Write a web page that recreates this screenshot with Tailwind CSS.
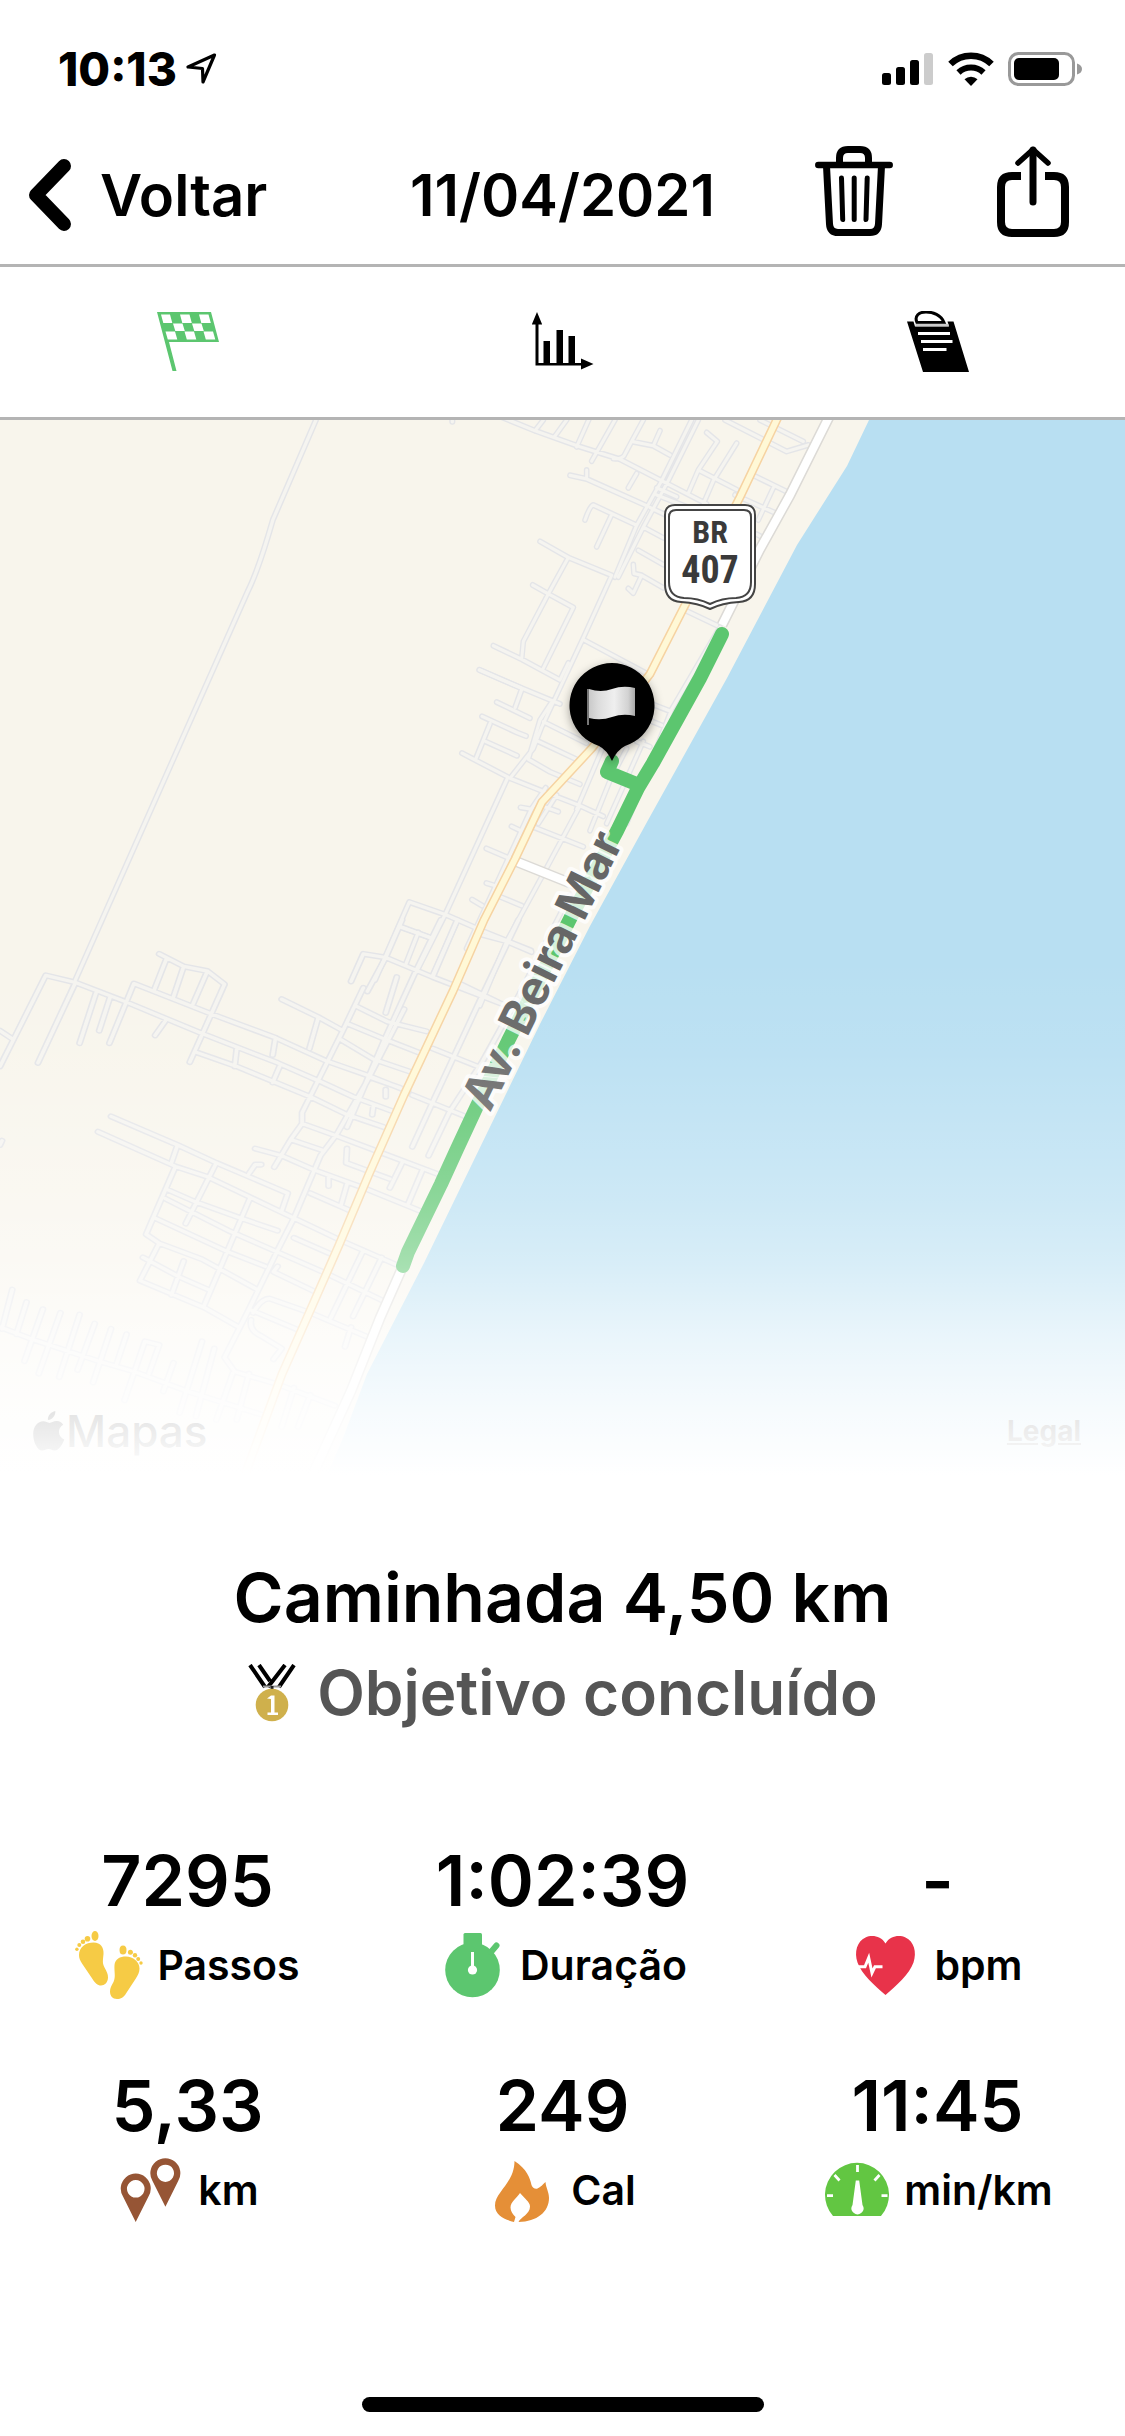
<!DOCTYPE html>
<html lang="pt-BR">
<head>
<meta charset="utf-8">
<meta name="viewport" content="width=device-width, initial-scale=1">
<title>Caminhada 11/04/2021</title>
<script src="https://cdn.jsdelivr.net/npm/@tailwindcss/browser@4"></script>
</head>
<body class="flex min-h-screen flex-col bg-white font-['Inter',sans-serif] font-semibold text-black">

<!-- Status bar -->
<div class="flex h-[126px] items-center justify-between pt-3 pr-[43px] pl-[58px]">
  <div class="flex items-center gap-2">
    <span class="text-[46px] leading-none font-extrabold">10:13</span>
    <svg class="h-8 w-8" viewBox="0 0 32 32" fill="none" stroke="#000" stroke-width="3.200" stroke-linejoin="round"><path d="M29.500 2 3 14 17.500 15.500 18 29Z"/></svg>
  </div>
  <div class="flex items-center gap-[14px]">
    <svg class="h-8 w-[52px]" viewBox="0 0 52 32"><rect x="0" y="20" width="9" height="12" rx="2.500"/><rect x="14" y="14" width="9" height="18" rx="2.500"/><rect x="28" y="7" width="9" height="25" rx="2.500"/><rect x="42" y="0" width="9" height="32" rx="2.500" fill="#ccc"/></svg>
    <svg class="h-[34px] w-[46px]" viewBox="0 0 46 34"><path d="M23 34l-6.500-6.800a9.500 9.500 0 0 1 13 0z"/><path d="M10.500 20.500a18 18 0 0 1 25 0" fill="none" stroke="#000" stroke-width="6"/><path d="M2.500 12a29.500 29.500 0 0 1 41 0" fill="none" stroke="#000" stroke-width="6.500"/></svg>
    <svg class="h-[34px] w-[74px]" viewBox="0 0 74 34"><rect x="1.500" y="1.500" width="64" height="31" rx="9" fill="none" stroke="#999" stroke-width="3"/><rect x="6" y="6" width="45" height="22" rx="5"/><path d="M69 11.500q5 1.500 5 5.500t-5 5.500z" fill="#999"/></svg>
  </div>
</div>

<!-- Navigation -->
<header class="grid h-[141px] grid-cols-[1fr_auto_1fr] items-center border-b-[3px] border-[#b4b4b4] text-[58px] leading-none">
  <button type="button" class="ml-7 flex items-center gap-7 justify-self-start">
    <svg class="h-[74px] w-11" viewBox="0 0 44 74" fill="none" stroke="#000" stroke-width="14" stroke-linecap="round" stroke-linejoin="round"><path d="M36 8 8 37 36 66"/></svg>
    <span>Voltar</span>
  </button>
  <h1>11/04/2021</h1>
  <div class="mr-14 flex items-center gap-[104px] justify-self-end pb-2">
    <button type="button" aria-label="Excluir">
      <svg class="block h-[90px] w-[78px]" viewBox="0 0 78 90" fill="none" stroke="#000" stroke-width="7"><path d="M24.500 18v-6q0-8.500 8.500-8.500h12q8.500 0 8.500 8.500v6M11.500 20l3 58q.5 8.500 8.500 8.500h32q8 0 8.500-8.500l3-58"/><path d="M3.300 19h71.400" stroke-width="6.500" stroke-linecap="round"/><path d="M26.500 32l1.200 41.500M39.200 32v41.500M52.200 32l-1.200 41.500" stroke-width="5" stroke-linecap="round"/></svg>
    </button>
    <button type="button" aria-label="Compartilhar">
      <svg class="block h-[91px] w-[72px]" viewBox="0 0 72 91" fill="none" stroke="#000" stroke-width="8"><path d="M24 30h-9Q4 30 4 41v35q0 11 11 11h42q11 0 11-11V41q0-11-11-11h-9"/><path d="M36 4v52" stroke-width="7" stroke-linecap="round"/><path d="M21 17 36 3.500 51 17" stroke-width="5.500" stroke-linecap="round" stroke-linejoin="round"/></svg>
    </button>
  </div>
</header>

<nav class="grid h-[153px] grid-cols-3 items-center justify-items-center border-b-[3px] border-[#b4b4b4]">
  <button type="button" aria-label="Resumo">
    <svg class="block h-[62px] w-[62px]" viewBox="0 0 62 62"><path d="M0 1h54l8 30H12l7.500 29H15.500z" fill="#5cc66f"/><path d="M4 3.500h9l2.300 8.500H6.300zM23 3.500h9.500l2.300 8.500h-9.500zM42 3.500h9.500l2.300 8.500h-9.500zM16 12.500h9.500l2.300 7.500h-9.500zM35 12.500h9.500l2.300 7.500h-9.500zM8.500 20.500H18l2.300 8h-9.500zM27.500 20.500H37l2.300 8h-9.500zM46.500 20.500H56l2.300 8h-9.500z" fill="#fff"/></svg>
  </button>
  <button type="button" aria-label="Gráficos">
    <svg class="block h-[62px] w-[62px]" viewBox="0 1 62 62"><path d="M5 2l5.200 12.500H6.500V53H49v-4.500L61.500 54 49 59.500V55.500H3.500V14.500H-.2zM11.500 31h6.500v23h-6.500zM24.500 20H31v34h-6.500zM36.500 26H43v28h-6.500z"/></svg>
  </button>
  <button type="button" aria-label="Notas">
    <svg class="block h-[62px] w-[62px]" viewBox="0 1 62 62"><path d="M0 11.500h6.500L8 16.500h34L40.500 11.500h6L62 62H16z"/><path d="M10 12.500C7 6 12 2 19 2S34 5 37 12.500z" fill="#fff" stroke="#000" stroke-width="3"/><path d="M8.500 15h33" stroke="#ccc" stroke-width="2.500"/><path d="M11 23.500h32M14 31.500h31.500M16 39.500h23.500" stroke="#fff" stroke-width="3"/></svg>
  </button>
</nav>

<!-- Route map -->
<section class="relative overflow-hidden">
  <svg class="block h-auto w-full" viewBox="0 420 1125 1055" role="img" aria-label="Mapa do percurso">
    <defs>
      <linearGradient id="cloth" x1="0" x2="1" y1="0" y2="0"><stop offset="0" stop-color="#c9c9c9"/><stop offset=".2" stop-color="#dcdcdc"/><stop offset=".55" stop-color="#efefef"/><stop offset=".85" stop-color="#d2d2d2"/><stop offset="1" stop-color="#a8a8a8"/></linearGradient>
      <filter id="shade" x="-30%" y="-30%" width="160%" height="160%"><feDropShadow dx="0" dy="3" stdDeviation="5" flood-opacity=".35"/></filter>
      <g id="streets">
        <path transform="translate(480 420) scale(.3333 .3571)" d="M60-10 165 30 300 75 420 110 545 170 680 235M190 0 165 30M260 0 225 45M345-40 290 75M405 0 335 115M490 0 455 60 435 95Q430 110 400 108M455 60 520 72 570 98M540 30 520 72M635 0 545 170 470 295 405 440M655 0 562 175 490 300 415 440M470 150 445 190M680 35 712 60 655 140 770 195M655 140 625 205M770 65 700 170 670 235M735 0 920 88 985 70M840 0 970 60M820 155 930 205M765 210 890 262M880 190 835 280M830 320 850 330M270 155 320 165 500 240M320 140V165M315 280Q330 240 340 238L470 295M395 265 350 355M180 340 265 385 395 435M265 385 205 487 130 620 125 670M158 462 205 487 280 525 190 695M40 632 125 670 240 728 265 680M395 435 310 610 185 860 160 920 90 1003M530 190 590 215M530 210 640 250M510 245 555 265M490 300 550 330M475 365 550 405M460 405 462 430 485 435 550 470M485 435 460 485 445 472M310 615 500 710M0 700 110 745 240 795M620 535 710 575M720 580 575 810 440 1130M50 790 150 835M215 790 180 840 145 950 210 985 300 1020M190 845 320 905M175 900 300 955M90 1003 190 1040 300 1080 370 1110M185 1080 235 1097M500 790 570 815M505 840 545 855M470 900 510 915M440 920 390 1010 330 1150M490 900 380 1130M300 1080 185 1280 80 1460 0 1640M230 1050 175 1130M160 1140 310 1195M60 1335 125 1360M0 1440 80 1460 155 1490M270 1330 100 1640M390 870 290 1090"/>
        <path transform="translate(0 420) scale(.359 .3571)" d="M1260-5V5M880 0 760 280Q720 420 690 480L210 1568M1453 755 1435 805M1335 700 1450 750M1343 830 1440 875 1465 885M1365 850 1325 950M1352 900 1440 940M1287 933 1415 1000 1240 1385 1160 1545M1355 1200 1420 1228M1355 1297 1375 1303M1315 1343 1343 1360M1450 1085 1480 1090M1425 1138 1450 1150M1480 1090 1300 1480M1520 1030 1480 1090M1140 1350 1240 1385 1320 1420M1140 1350 1045 1568M1115 1420 1200 1450M1165 1435 1130 1525M1275 1400 1205 1555"/>
        <path transform="translate(0 920) scale(.4082 .3571)" d="M185 175 93 400M0 410 33 335 112 155 185 175 310 230 495 318 680 400 780 450 865 495 960 535M0 310 33 335M0 630 5 618M235 205 195 345M270 215 243 310M268 345 328 178 515 262 675 330 800 395 900 435 1000 480M390 95 450 130 508 143 550 180 465 398M408 108 378 195M450 130 425 215M508 143 473 235M408 278 380 323M480 370 580 410 760 495 850 545 940 580M580 360 575 410M685 410 668 455M675 330 668 378M690 222 780 272 840 310M780 272 758 360M985 0 945 105 900 200M890 190 840 310 740 540V570L712 615 672 692M860 172 890 95 945 105 1060 160 1230 235M1080 0 1020 140 940 340 850 580M1120 0 1060 160M985 20 1055 50M870 240 950 285 1045 312M972 160 945 260M990 250 900 450 825 600 785 660 720 835 680 925 610 1090M850 290 945 335 1035 375M835 335 915 390 1005 425M905 440 980 470M945 475V495M912 545 915 520M740 570 825 605 930 650 1080 715M625 640 690 660 770 700 890 750 1030 815M712 615 790 645M850 640 848 680 955 725M985 680 955 750M1035 700 1000 795M760 765 860 815M835 800 850 740M805 720V745M272 550 435 630 530 680 705 765 690 815M435 630 420 680M240 593 430 690 510 720 720 835 840 900 980 970M430 690 375 835 358 880 390 905 495 950 630 1035M530 680 455 850M612 780 500 1080M610 710 625 685 640 685M410 755 480 790 590 835 680 870M405 780 560 870 680 930 800 990 945 1070M380 835 560 930 650 970M350 945 440 1000 510 1035M450 955 420 1050M390 905 343 1010 500 1085 585 1140M720 890 820 940M890 925 810 1115M935 945 865 1110M680 970 670 985 770 1040M610 1090 550 1225 575 1265 680 1300 820 1360M610 1090 735 1150M620 1100Q640 1060 660 1060L760 1100 905 1170M860 1140 845 1195M615 1120Q610 1150 640 1165L690 1200 670 1230M0 1140 80 1175 240 1235 330 1265 460 1320 640 1385M30 1035 5 1145M65 1070 40 1160M105 1090 60 1235M148 1100 95 1270M195 1105 145 1280M232 1130 190 1260M272 1145 228 1295M310 1160 285 1245M305 1345 355 1180 390 1190 365 1270M425 1240 400 1320M495 1180 440 1380M525 1200 480 1390M570 1270 530 1400M610 1270 580 1400M720 1310 690 1420M760 1330 730 1420M1270 0 1180 215 1060 510 1010 635M1345 60 1180 400 1100 540 1050 660M1180 30 1300 85M1120 175 1220 230M1060 360 1170 410M1010 490 1140 550"/>
      </g>
    </defs>
    <rect y="420" width="1125" height="1055" fill="#f8f5ec"/>
    <use href="#streets" fill="none" stroke="#e4e5e8" stroke-width="17" stroke-linecap="round" stroke-linejoin="round"/>
    <use href="#streets" fill="none" stroke="#f5f4f0" stroke-width="9" stroke-linecap="round" stroke-linejoin="round"/>
    <path d="M869 420 847 466 797 545 727 678 647 822 590 926 540 1024 488 1131 424 1263 367 1374 343 1438 325 1480H1125V420Z" fill="#b8dff2"/>
    <g fill="none" stroke-linejoin="round">
      <path d="M830 415 790 495 760 549 722 625M403 1266 380 1318 351 1391 318 1463 310 1480M515 861 575 885" stroke="#dcdad6" stroke-width="11"/>
      <path d="M830 415 790 495 760 549 722 625M403 1266 380 1318 351 1391 318 1463 310 1480M515 861 575 885" stroke="#fff" stroke-width="8"/>
      <path d="M779 415 740 497 650 674 592 748 542 802 515 859 484 920 453 991 404 1095 369 1174 339 1245 306 1320 282 1374 243 1480" stroke="#f6d3a2" stroke-width="9"/>
      <path d="M779 415 740 497 650 674 592 748 542 802 515 859 484 920 453 991 404 1095 369 1174 339 1245 306 1320 282 1374 243 1480" stroke="#fff8d6" stroke-width="6"/>
      <path d="M722 634 700 678 653 763 638 788 617 831 572 915 508 1041 477 1106 457 1149 441 1184 408 1252 403 1266M612 761 607 772 634 783" stroke="#5cc66f" stroke-width="14" stroke-linecap="round"/>
    </g>

    <!-- Road shield -->
    <path d="M675 505h70q10 0 10 10v69q0 17-16 18-17 1-29 7-12-6-29-7-16-1-16-18v-69q0-10 10-10z" fill="#fff" stroke="#444" stroke-width="2"/>
    <path d="M676 510h68q7 0 7 7v65q0 15-15 16-14 0-26 6-12-6-26-6-15-1-15-16v-65q0-7 7-7z" fill="none" stroke="#444" stroke-width="2"/>
    <g fill="#3a3a3a" text-anchor="middle" class="font-['Liberation_Sans_Narrow','Roboto_Condensed','Roboto',sans-serif] font-bold">
      <text x="710" y="543" font-size="32">BR</text>
      <text x="710" y="583" font-size="38">407</text>
    </g>

    <text transform="translate(490 1113) rotate(-63.800)" class="font-bold" font-size="47" fill="#666" stroke="#fff" stroke-opacity=".75" stroke-width="8" stroke-linejoin="round" paint-order="stroke">Av. Beira Mar</text>

    <!-- Start pin -->
    <path d="M612 761q-5-11-13-15a42.500 42.500 0 1 1 26 0q-8 4-13 15z" filter="url(#shade)"/>
    <path d="M588 689v36" stroke="#777" stroke-width="2"/>
    <path d="M589 689q12 4 23 0t23-1v28q-12-3-23 1t-23 1z" fill="url(#cloth)"/>
  </svg>
  <div class="absolute inset-x-8 bottom-5 flex items-center justify-between">
    <div class="flex items-center text-[44px] leading-[48px] font-medium text-[#222]">
      <svg class="h-10 w-[34px]" viewBox="0 0 30 38" fill="#222"><path d="M21 0c.5 4-3 8.500-7 8.500C13.500 4.500 17 .8 21 0zM28.500 13c-6 3.500-5 11.500 1 14-2 5.500-5.500 10.500-9 10.500-2.500 0-3.500-1.500-6-1.500s-3.500 1.500-6 1.500C4 37.500 0 29.500 0 22 0 14.500 4.500 9.800 9.500 9.800c2.500 0 4 1.500 6 1.500 1.800 0 3.500-1.800 7-1.800 2.500 0 4.500 1.200 6 3.500z"/></svg>
      <span>Mapas</span>
    </div>
    <a href="#" class="mr-3 text-[28px] leading-[48px] font-bold text-[#222] underline">Legal</a>
  </div>
  <div class="pointer-events-none absolute inset-0 bg-[linear-gradient(to_bottom,rgb(255_255_255/0)_51%,rgb(255_255_255/.07)_60%,rgb(255_255_255/.2)_68%,rgb(255_255_255/.3)_74%,rgb(255_255_255/.45)_80%,rgb(255_255_255/.7)_87%,rgb(255_255_255/.86)_93%,#fff_100%)]"></div>
</section>

<!-- Workout summary -->
<section class="pt-[74px] text-center">
  <h2 class="text-[68px] leading-[96px]">Caminhada 4,50 km</h2>
  <p class="flex items-center justify-center gap-5 text-[62px] leading-[96px] text-[#555]">
    <svg class="h-[58px] w-[50px]" viewBox="0 0 50 58"><path d="M3 1 18 23M12 1 23 17M47 1 32 23M38 1 21 23" stroke="#000" stroke-width="4" fill="none"/><path d="M16 22.500h18" stroke="#999" stroke-width="2"/><path d="M25 22v4" stroke="#222" stroke-width="3"/><circle cx="25" cy="41" r="16.300" fill="#cfb04c"/><path d="M20 34.500 24 31.500h3.500V48.500H31V51H20.500V48.500H24V35z" fill="#fff"/></svg>
    <span>Objetivo concluído</span>
  </p>
</section>

<dl class="mt-[90px] grid grid-cols-3 gap-y-[57px] text-center">
  <div class="flex flex-col-reverse">
    <dt class="flex items-center justify-center gap-[14px] text-[41px] leading-[68px]">
      <svg class="h-[68px] w-[68px]" viewBox="0 0 68 68" fill="#f6cb45"><ellipse cx="20" cy="5" rx="3.500" ry="5"/><circle cx="12.500" cy="7.700" r="2.800"/><circle cx="8" cy="10.700" r="2.300"/><circle cx="4.300" cy="14" r="2"/><circle cx="1.900" cy="18.300" r="1.700"/><path d="M4 24C4 16 11 11.500 18.500 11.500S29 17 28.500 23c-.5 6-1.500 9 1 13.500S33 43 33 46.500c0 5-3.500 8-7 8s-6-2.500-8.500-6.500L7 32.500C5 29.500 4 27 4 24z"/><ellipse cx="48" cy="19" rx="3.500" ry="4.600"/><circle cx="55.400" cy="21.300" r="2.500"/><circle cx="60" cy="24.300" r="2.200"/><circle cx="63.200" cy="28" r="2"/><circle cx="66" cy="32" r="1.700"/><path d="M39.500 34C40 28 45 25.500 51 25.500c7 0 13.500 5 13.500 12 0 4-1.500 6.500-4 10.500l-9.500 14.500C48.500 66.500 46 68 42 68c-4.500 0-7-3-7-7.500 0-4 1.500-5.500 3.500-9.500 2.500-5 .5-11 1-17z"/></svg>
      Passos
    </dt>
    <dd class="text-[70px] leading-[100px]">7295</dd>
  </div>
  <div class="flex flex-col-reverse">
    <dt class="flex items-center justify-center gap-[14px] text-[41px] leading-[68px]">
      <svg class="h-[68px] w-[68px]" viewBox="-7 -2 68 68"><circle cx="27.500" cy="37" r="27.300" fill="#5cc66f"/><rect x="18.500" y="0" width="18.500" height="14" rx="1.500" fill="#5cc66f"/><path d="M51.500 12.500 46 19" stroke="#5cc66f" stroke-width="6" stroke-linecap="round"/><path d="M27.500 19v17" stroke="#fff" stroke-width="3"/><circle cx="27.500" cy="37" r="4.600" fill="#fff"/></svg>
      Duração
    </dt>
    <dd class="text-[70px] leading-[100px]">1:02:39</dd>
  </div>
  <div class="flex flex-col-reverse">
    <dt class="flex items-center justify-center gap-[14px] text-[41px] leading-[68px]">
      <svg class="h-[68px] w-[68px]" viewBox="-4 -5 68 68"><path d="M29.500 7.500C34 0 43 -1.500 49.500 1.500 58 5.500 61 16 57.500 26.500 53.500 38 40 50 29.500 59 19 50 5.500 38 1.500 26.500-2 16 1 5.500 9.500 1.500 16-1.500 25 0 29.500 7.500Z" fill="#e8334a"/><path d="M2 30.700h7l3.700-9L16 37l3-6.300h7.500" fill="none" stroke="#fff" stroke-width="3"/></svg>
      bpm
    </dt>
    <dd class="text-[70px] leading-[100px]">-</dd>
  </div>
  <div class="flex flex-col-reverse">
    <dt class="flex items-center justify-center gap-[14px] text-[41px] leading-[68px]">
      <svg class="h-[68px] w-[68px]" viewBox="-5 -2 68 68" fill="#965535" fill-rule="evenodd"><path d="M14.700 64 2 38.500A15 15 0 1 1 27.500 38.500ZM14.700 22a8.800 8.800 0 1 0 .1 0zM44.400 48.700 31.500 23A15 15 0 1 1 57.200 23ZM44.400 6.700a8.600 8.600 0 1 0 .1 0z"/></svg>
      km
    </dt>
    <dd class="text-[70px] leading-[100px]">5,33</dd>
  </div>
  <div class="flex flex-col-reverse">
    <dt class="flex items-center justify-center gap-[14px] text-[41px] leading-[68px]">
      <svg class="h-[68px] w-[68px]" viewBox="-6 -5 68 68"><path d="M19.500 0C32 8 35 17 36.500 24c.8 3 4 4.500 6 3.500 3-1.500 5.500-4 8-6.500.5 6 3.500 10 3.500 16C54 51 42 60.500 23.500 61c2-4.500 11.500-8 11.500-15.500C35 41 29 37 25 32 22 37 15.500 41 15.500 46.500c0 4 2.500 7 5 9.500L19 61C9 58.500 0 54 0 44.500 0 31 19.500 22 19.500 0Z" fill="#e58f37"/></svg>
      Cal
    </dt>
    <dd class="text-[70px] leading-[100px]">249</dd>
  </div>
  <div class="flex flex-col-reverse">
    <dt class="flex items-center justify-center gap-[14px] text-[41px] leading-[68px]">
      <svg class="h-[68px] w-[68px]" viewBox="-3 -7 68 68"><path d="M8 53A32 32 0 1 1 56 53Z" fill="#62c642"/><path d="M32.500 2v7M2 32.700h6M56.500 32.700h6M9.500 12l5 5.500M54.500 12l-5 5.500" stroke="#fff" stroke-width="2.800"/><path d="M30.800 17.500h3.400L37.500 42a6 6 0 1 1-10 0z" fill="#fff"/></svg>
      min/km
    </dt>
    <dd class="text-[70px] leading-[100px]">11:45</dd>
  </div>
</dl>

<div class="mx-auto mt-auto mb-6 h-[15px] w-[402px] rounded-full bg-black"></div>
</body>
</html>
